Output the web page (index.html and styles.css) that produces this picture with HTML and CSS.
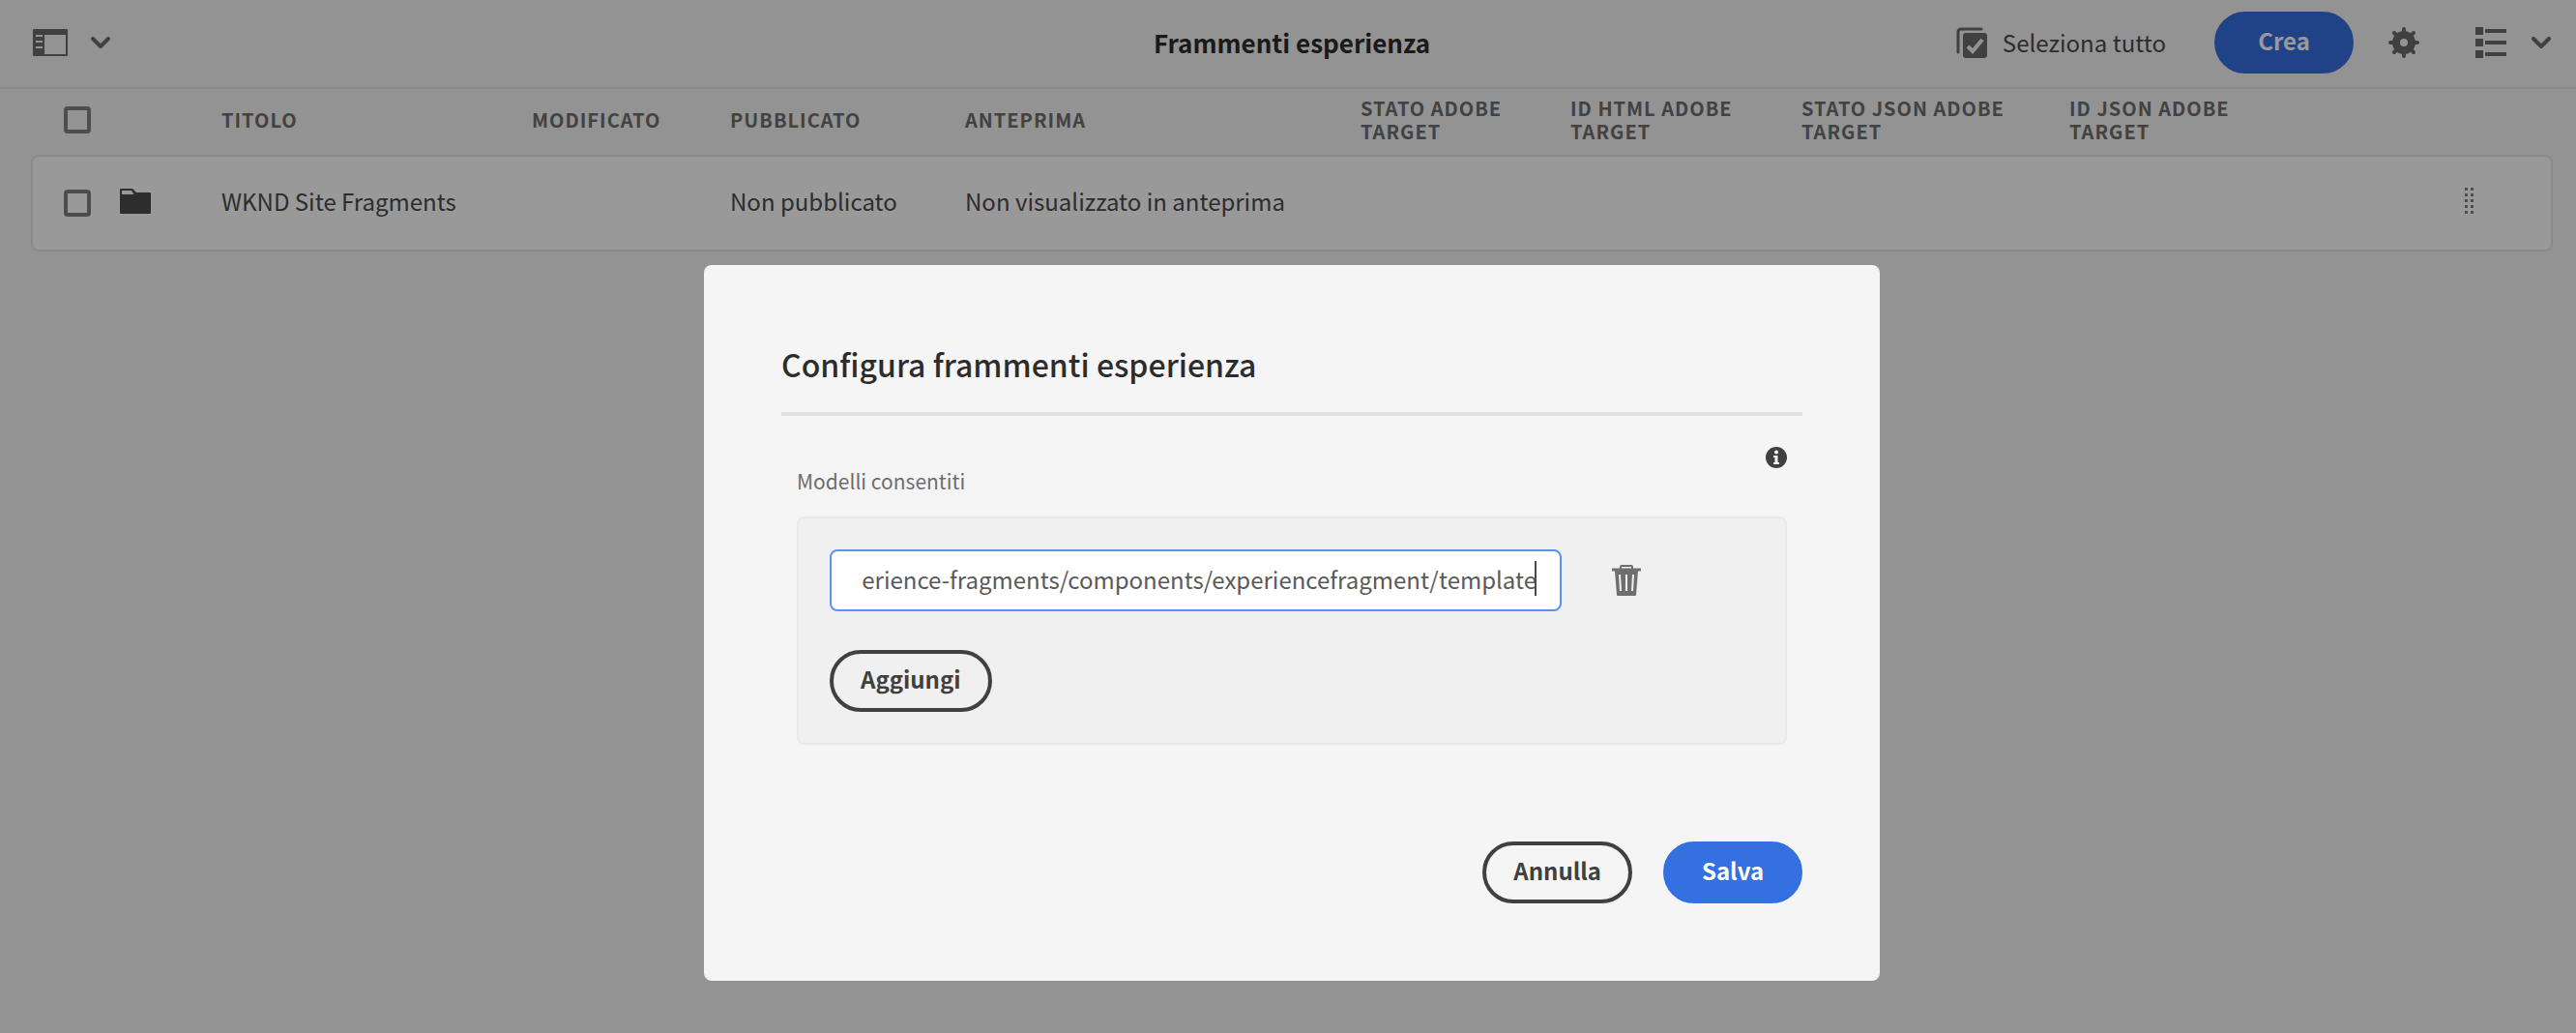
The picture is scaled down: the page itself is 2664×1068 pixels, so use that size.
FILE: index.html
```html
<!DOCTYPE html>
<html lang="it">
<head>
<meta charset="utf-8">
<title>Frammenti esperienza</title>
<link rel="stylesheet" href="styles.css">
</head>
<body>
<header class="toolbar">
  <div class="toolbar-start">
    <button class="icon-button rail-toggle" type="button" aria-label="Barra laterale">
      <svg width="36" height="28" viewBox="0 0 36 28" fill="currentColor">
        <path fill-rule="evenodd" d="M1 0h34a1 1 0 0 1 1 1v26a1 1 0 0 1-1 1H1a1 1 0 0 1-1-1V1a1 1 0 0 1 1-1zM12 6v20h22V6zM3 6v2h7V6zM3 12v2h7v-2zM3 18v2h7v-2z"/>
      </svg>
      <svg width="20" height="12" viewBox="0 0 20 12" fill="none" stroke="currentColor" stroke-width="4" stroke-linecap="round" stroke-linejoin="round"><path d="M2 2l8 8 8-8"/></svg>
    </button>
  </div>
  <h1 class="toolbar-title">Frammenti esperienza</h1>
  <div class="toolbar-end">
    <button class="icon-button select-all" type="button">
      <svg width="32" height="32" viewBox="0 0 32 32" fill="none">
        <path d="M2 26V5a3 3 0 0 1 3-3h21" stroke="currentColor" stroke-width="3" stroke-linecap="round"/>
        <rect x="7" y="6" width="25" height="26" rx="3" fill="currentColor"/>
        <path d="M12 20l5 5 10-12" stroke="#f5f5f5" stroke-width="4"/>
      </svg>
      Seleziona tutto
    </button>
    <button class="button button-primary create" type="button">Crea</button>
    <button class="icon-button settings" type="button" aria-label="Impostazioni">
      <svg width="32" height="32" viewBox="0 0 32 32" fill="none" stroke="currentColor">
        <circle cx="16" cy="16" r="8" stroke-width="8"/>
        <path stroke-width="4" stroke-linecap="round" d="M16 2v4M16 26v4M2 16h4M26 16h4M6 6l3 3M23 23l3 3M26 6l-3 3M9 23l-3 3"/>
      </svg>
    </button>
    <button class="icon-button view-switch" type="button" aria-label="Vista elenco">
      <svg width="32" height="32" viewBox="0 0 32 32" fill="currentColor">
        <path d="M0 0h8v8H0zM0 12h8v8H0zM0 24h8v8H0zM10 2h22v4H10zM10 14h22v4H10zM10 26h22v4H10z"/>
      </svg>
      <svg width="20" height="12" viewBox="0 0 20 12" fill="none" stroke="currentColor" stroke-width="4" stroke-linecap="round" stroke-linejoin="round"><path d="M2 2l8 8 8-8"/></svg>
    </button>
  </div>
</header>

<main class="listing">
  <table class="list">
    <colgroup>
      <col class="col-check"><col class="col-icon"><col class="col-title"><col class="col-modified">
      <col class="col-published"><col class="col-preview"><col class="col-target-status">
      <col class="col-target-html"><col class="col-json-status"><col class="col-json-id"><col>
    </colgroup>
    <thead>
      <tr>
        <th class="cell-check"><input class="checkbox" type="checkbox" aria-label="Seleziona tutti gli elementi"></th>
        <th></th>
        <th scope="col">TITOLO</th>
        <th scope="col">MODIFICATO</th>
        <th scope="col">PUBBLICATO</th>
        <th scope="col">ANTEPRIMA</th>
        <th scope="col">STATO ADOBE TARGET</th>
        <th scope="col">ID HTML ADOBE TARGET</th>
        <th scope="col">STATO JSON ADOBE TARGET</th>
        <th scope="col">ID JSON ADOBE TARGET</th>
        <th></th>
      </tr>
    </thead>
    <tbody>
      <tr>
        <td class="cell-check"><input class="checkbox" type="checkbox" aria-label="Seleziona WKND Site Fragments"></td>
        <td>
          <svg class="folder" width="32" height="26" viewBox="0 0 32 26" fill="currentColor">
            <path fill-rule="evenodd" d="M1 0h12l4 4h14a1 1 0 0 1 1 1v20a1 1 0 0 1-1 1H1a1 1 0 0 1-1-1V1a1 1 0 0 1 1-1zM2 2v4h12.500l-2.500-4z"/>
          </svg>
        </td>
        <td>WKND Site Fragments</td>
        <td></td>
        <td>Non pubblicato</td>
        <td>Non visualizzato in anteprima</td>
        <td></td>
        <td></td>
        <td></td>
        <td></td>
        <td class="cell-handle">
          <svg class="handle" width="10" height="28" viewBox="0 0 10 28" fill="currentColor">
            <path d="M0 0h3v3H0zM6 0h3v3H6zM0 6h3v3H0zM6 6h3v3H6zM0 12h3v3H0zM6 12h3v3H6zM0 18h3v3H0zM6 18h3v3H6zM0 24h3v3H0zM6 24h3v3H6z"/>
          </svg>
        </td>
      </tr>
    </tbody>
  </table>
</main>

<div class="overlay">
  <section class="modal" role="dialog" aria-modal="true" aria-labelledby="modal-title">
    <h2 class="modal-title" id="modal-title">Configura frammenti esperienza</h2>
    <form class="modal-form">
      <div class="field-head">
        <label class="field-label" for="template-path">Modelli consentiti</label>
        <svg class="info" width="22" height="22" viewBox="0 0 22 22" fill="none" role="img" aria-label="Informazioni">
          <circle cx="11" cy="11" r="11" fill="#404040"/>
          <circle cx="11" cy="5.500" r="2" fill="#f5f5f5"/>
          <path d="M8 9h4.500v7H14v2H8v-2h1.500v-5H8z" fill="#f5f5f5"/>
        </svg>
      </div>
      <div class="well">
        <div class="entry">
          <div class="path-field">
            <input class="path-input" id="template-path" type="text" value="erience-fragments/components/experiencefragment/template">
            <span class="caret"></span>
          </div>
          <button class="icon-button delete" type="button" aria-label="Elimina">
            <svg width="30" height="32" viewBox="0 0 30 32" fill="none" stroke="currentColor">
              <path d="M9 4V2a1 1 0 0 1 1-1h10a1 1 0 0 1 1 1v2" stroke-width="2"/>
              <path d="M0 5h30" stroke-width="3"/>
              <path fill="currentColor" stroke="none" fill-rule="evenodd" d="M3 6h24l-2 25a1 1 0 0 1-1 1H6a1 1 0 0 1-1-1zM7 10l1 17h2L9 10zM14 10v17h2V10zM21 10l-1 17h2l1-17z"/>
            </svg>
          </button>
        </div>
        <button class="button button-secondary" type="button">Aggiungi</button>
      </div>
      <div class="modal-actions">
        <button class="button button-secondary" type="button">Annulla</button>
        <button class="button button-primary" type="submit">Salva</button>
      </div>
    </form>
  </section>
</div>
</body>
</html>
```
FILE: styles.css
```css
* {
  box-sizing: border-box;
}

body {
  margin: 0;
  min-height: 100vh;
  background: #f5f5f5;
  color: #4b4b4b;
  font-family: "Noto Sans CJK SC", "Open Sans", sans-serif;
  font-size: 24px;
  line-height: 36px;
}

svg {
  display: block;
  flex: none;
}

button,
input {
  font: inherit;
}

/* Toolbar */
.toolbar {
  display: grid;
  grid-template-columns: 1fr auto 1fr;
  align-items: center;
  height: 92px;
  padding: 0 26px 2px 34px;
  border-bottom: 2px solid #e6e6e6;
}

.toolbar-title {
  margin: 0;
  color: #2c2c2c;
  font-size: 26px;
  font-weight: 700;
}

.toolbar-start,
.toolbar-end {
  display: flex;
  align-items: center;
}

.toolbar-end {
  justify-content: flex-end;
}

.icon-button {
  display: inline-flex;
  align-items: center;
  padding: 0;
  border: 0;
  background: none;
  color: #6b6b6b;
}

.rail-toggle {
  gap: 24px;
}

.select-all {
  gap: 16px;
  margin-right: 50px;
  color: #4b4b4b;
}

.select-all svg {
  color: #6b6b6b;
}

.create {
  margin-right: 36px;
}

.settings {
  margin-right: 58px;
}

.view-switch {
  gap: 26px;
}

/* Buttons */
.button {
  height: 64px;
  min-width: 144px;
  padding: 0 28px 4px;
  border: 4px solid #404040;
  border-radius: 32px;
  background: none;
  color: #404040;
  font-weight: 700;
}

.button-primary {
  border-color: #3570e0;
  background: #3570e0;
  color: #fff;
}

/* List */
.listing {
  padding: 0 24px 0 32px;
}

.list {
  width: 100%;
  table-layout: fixed;
  border-collapse: separate;
  border-spacing: 0;
}

.col-check { width: 92px; }
.col-icon { width: 105px; }
.col-title { width: 321px; }
.col-modified { width: 205px; }
.col-published { width: 243px; }
.col-preview { width: 409px; }
.col-target-status { width: 217px; }
.col-target-html { width: 239px; }
.col-json-status { width: 277px; }
.col-json-id { width: 240px; }

.list th {
  height: 68px;
  padding: 0 8px 4px 0;
  color: #6e6e6e;
  font-size: 20px;
  font-weight: 700;
  letter-spacing: 1px;
  line-height: 24px;
  text-align: left;
}

.list td {
  height: 100px;
  padding: 0 0 4px;
  border: solid #e6e6e6;
  border-width: 2px 0;
  background: #fff;
  white-space: nowrap;
}

.list td:first-child {
  border-left-width: 2px;
  border-radius: 8px 0 0 8px;
}

.list td:last-child {
  border-right-width: 2px;
  border-radius: 0 8px 8px 0;
}

.list .cell-check {
  padding-left: 34px;
}

.list td.cell-check {
  padding: 0 0 0 32px;
}

.checkbox {
  display: block;
  width: 28px;
  height: 28px;
  margin: 0;
  appearance: none;
  border: 4px solid #808080;
  border-radius: 4px;
}

.handle {
  margin: 0 79px 0 auto;
  color: #808080;
}

/* Modal */
.overlay {
  position: fixed;
  inset: 0;
  display: flex;
  justify-content: center;
  align-items: flex-start;
  padding: 274px 0 0 8px;
  background: rgba(0, 0, 0, 0.4);
}

.modal {
  width: 1216px;
  max-width: 100%;
  padding: 78px 80px 80px;
  border-radius: 8px;
  background: #f5f5f5;
}

.modal-title {
  margin: 0;
  padding-bottom: 26px;
  border-bottom: 4px solid #e1e1e1;
  color: #2c2c2c;
  font-size: 32px;
  font-weight: 500;
  line-height: 48px;
}

.field-head {
  display: flex;
  justify-content: space-between;
  align-items: flex-start;
  padding: 32px 16px 22px;
}

.field-label {
  padding-top: 20px;
  color: #6e6e6e;
  font-size: 21px;
  line-height: 30px;
}

.well {
  margin: 0 16px;
  padding: 32px;
  border: 2px solid #e8e8e8;
  border-radius: 8px;
  background: #f0f0f0;
}

.entry {
  display: flex;
  align-items: center;
  gap: 52px;
  margin-bottom: 40px;
}

.path-field {
  position: relative;
  width: 757px;
}

.path-input {
  display: block;
  width: 100%;
  height: 64px;
  padding: 0 24px 4px;
  border: 2px solid #5c93ee;
  border-radius: 8px;
  outline: 0;
  background: #fff;
  color: #5a5a5a;
  text-align: right;
}

/* Text cursor at the end of the focused path */
.caret {
  position: absolute;
  top: 12px;
  right: 26px;
  width: 2px;
  height: 36px;
  background: #4b4b4b;
}

.delete {
  color: #6e6e6e;
}

.modal-actions {
  display: flex;
  justify-content: flex-end;
  gap: 32px;
  margin-top: 100px;
}
```
